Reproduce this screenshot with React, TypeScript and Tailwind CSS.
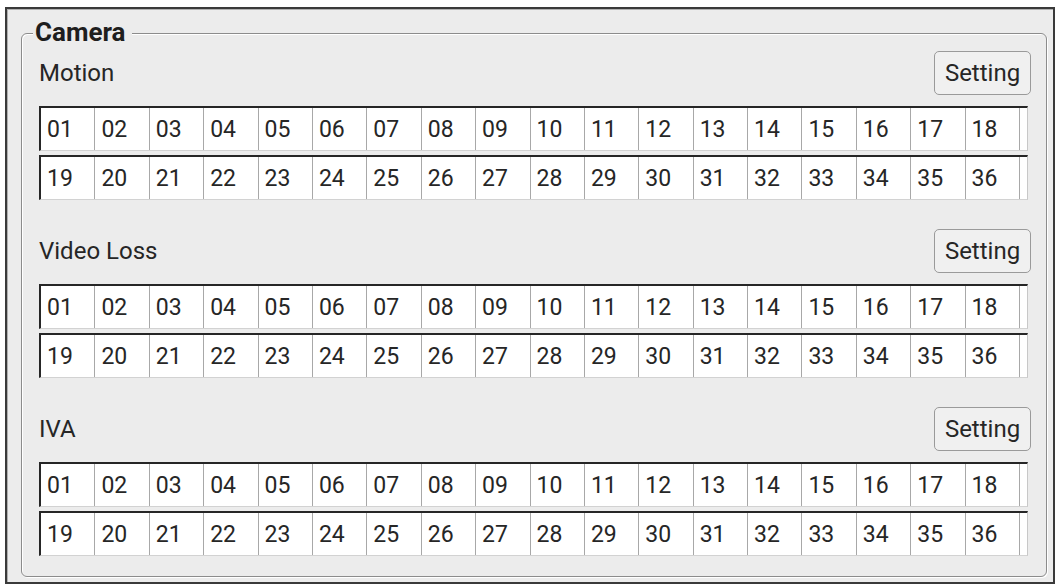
import React from "react";

const sections = ["Motion", "Video Loss", "IVA"];

const pad = (n: number) => String(n).padStart(2, "0");

function ChannelRow({ start }: { start: number }) {
  const nums = Array.from({ length: 18 }, (_, i) => start + i);
  return (
    <div className="flex h-[45px] w-[989px] border-t-2 border-l-2 border-t-[#262626] border-l-[#262626] border-b border-r border-b-[#d2d2d2] border-r-[#c8c8c8] bg-white">
      <div className="grid w-[979px] grid-cols-[repeat(18,minmax(0,1fr))]">
        {nums.map((n) => (
          <div
            key={n}
            className="flex items-center border-r border-[#a8a8a8] pl-[6px] pt-[3px] text-[23px] text-[#262626]"
          >
            {pad(n)}
          </div>
        ))}
      </div>
      <div className="flex-1" />
    </div>
  );
}

function Section({ title }: { title: string }) {
  return (
    <div className="flex flex-col">
      <div className="flex h-[44px] items-center justify-between">
        <span className="text-[24px] text-[#262626]">{title}</span>
        <button className="h-[44px] w-[97px] rounded-[5px] border border-[#9a9a9a] bg-[#f0f0f0] text-[24px] text-[#262626]">
          Setting
        </button>
      </div>
      <div className="mt-[11px] flex flex-col gap-[4px]">
        <ChannelRow start={1} />
        <ChannelRow start={19} />
      </div>
    </div>
  );
}

export default function App() {
  return (
    <div
      className="h-[587px] w-[1060px] bg-white pl-[5px] pt-[7px]"
      style={{ fontFamily: "Roboto, 'Noto Sans', sans-serif" }}
    >
      <div className="h-[577px] w-[1050px] border-2 border-[#3a3a3a] bg-[#ececec] shadow-[inset_1px_1px_0_#b0b0b0]">
        <div className="relative ml-[14px] mt-[24px] h-[544px] w-[1026px] rounded-[6px] border border-[#8c8c8c] shadow-[inset_1px_1px_0_#ffffff,1px_1px_0_#ffffff]">
          <span className="absolute left-[11px] top-[-17px] bg-[#ececec] px-[2px] pr-[6px] text-[26px] font-bold leading-[30px] text-[#1e1e1e]">
            Camera
          </span>
          <div className="flex flex-col gap-[29px] pl-[17px] pr-[15px] pt-[17px]">
            {sections.map((s) => (
              <Section key={s} title={s} />
            ))}
          </div>
        </div>
      </div>
    </div>
  );
}
